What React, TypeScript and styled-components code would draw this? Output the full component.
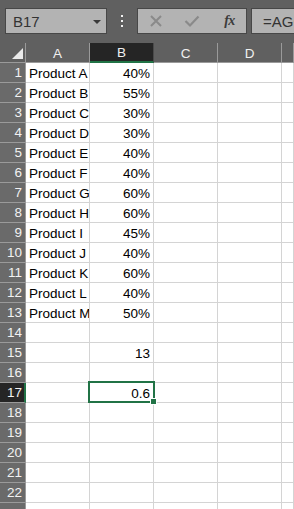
import React from "react";
import styled, { createGlobalStyle, css } from "styled-components";

const Global = createGlobalStyle`
  html, body { margin: 0; padding: 0; background: #606060; overflow: hidden; }
  body { width: 294px; height: 509px; font-family: "Liberation Sans", Arial, sans-serif; }
`;

const Page = styled.div`
  width: 294px;
  height: 509px;
  overflow: hidden;
  background: #606060;
  display: flex;
  flex-direction: column;
`;

const Toolbar = styled.div`
  height: 43px;
  flex: none;
  display: flex;
  align-items: flex-start;
  padding-top: 8px;
  box-sizing: border-box;
  padding-left: 5px;
  overflow: hidden;
`;

const NameBox = styled.div`
  width: 102px;
  height: 26px;
  box-sizing: border-box;
  background: #b3b3b3;
  border: 1px solid #474747;
  display: flex;
  align-items: center;
  justify-content: space-between;
  padding: 0 5px 0 7px;
  font-size: 15px;
  color: #333;
  flex: none;
`;

const Arrow = styled.span`
  width: 0;
  height: 0;
  border-left: 4px solid transparent;
  border-right: 4px solid transparent;
  border-top: 4px solid #3a3a3a;
  margin-top: 1px;
`;

const Dots = styled.div`
  width: 30px;
  height: 26px;
  flex: none;
  display: flex;
  flex-direction: column;
  align-items: center;
  justify-content: center;
  gap: 3px;
  span {
    width: 2px;
    height: 2px;
    background: #f2f2f2;
  }
`;

const ButtonGroup = styled.div`
  width: 110px;
  height: 26px;
  box-sizing: border-box;
  background: #b3b3b3;
  border: 1px solid #474747;
  display: flex;
  align-items: center;
  flex: none;
`;

const ToolButton = styled.div`
  width: 36px;
  height: 24px;
  display: flex;
  align-items: center;
  justify-content: center;
`;

const Fx = styled.span`
  font-family: "Liberation Serif", "Times New Roman", serif;
  font-style: italic;
  font-weight: bold;
  font-size: 14px;
  color: #3c3c3c;
  letter-spacing: -0.5px;
  margin-left: 3px;
`;

const FormulaBox = styled.div`
  margin-left: 4px;
  height: 26px;
  width: 100px;
  flex: none;
  box-sizing: border-box;
  background: #b3b3b3;
  border: 1px solid #474747;
  display: flex;
  align-items: center;
  padding-left: 11px;
  font-size: 15px;
  color: #333;
`;

const Sheet = styled.div`
  display: grid;
  grid-template-columns: 26px repeat(4, 64px) 1fr;
  grid-auto-rows: 20px;
  flex: none;
`;

const Corner = styled.div`
  box-sizing: border-box;
  border-right: 1px solid #9a9a9a;
  border-bottom: 1px solid #9a9a9a;
  position: relative;
  &::after {
    content: "";
    position: absolute;
    right: 2px;
    bottom: 3px;
    width: 0;
    height: 0;
    border-left: 11px solid transparent;
    border-bottom: 11px solid #eaeaea;
  }
`;

const ColHeader = styled.div<{ $active?: boolean }>`
  box-sizing: border-box;
  background: #606060;
  border-right: 1px solid #9a9a9a;
  border-bottom: 1px solid #9a9a9a;
  color: #f0f0f0;
  font-size: 13.5px;
  display: flex;
  align-items: center;
  justify-content: center;
  padding-top: 1px;
  ${(p) =>
    p.$active &&
    css`
      background: #252525;
      border-bottom: 2px solid #217346;
      border-right-color: #4a4a4a;
    `}
`;

const RowHeader = styled.div<{ $active?: boolean }>`
  box-sizing: border-box;
  background: #6a6a6a;
  border-right: 1px solid #9a9a9a;
  border-bottom: 1px solid #9a9a9a;
  color: #f2f2f2;
  font-size: 13.5px;
  display: flex;
  align-items: center;
  justify-content: flex-end;
  padding-right: 3px;
  ${(p) =>
    p.$active &&
    css`
      background: #252525;
      border-right: 2px solid #217346;
      padding-right: 2px;
    `}
`;

const Cell = styled.div<{ $align?: "left" | "right"; $selected?: boolean }>`
  box-sizing: border-box;
  background: #fff;
  border-right: 1px solid #d4d4d4;
  border-bottom: 1px solid #d4d4d4;
  color: #000;
  font-size: 13.5px;
  display: flex;
  align-items: center;
  justify-content: ${(p) => (p.$align === "right" ? "flex-end" : "flex-start")};
  padding: 1px 3px 0 3px;
  white-space: nowrap;
  overflow: hidden;
  position: relative;
  ${(p) =>
    p.$selected &&
    css`
      overflow: visible;
      z-index: 2;
    `}
`;

const SelectionFrame = styled.div`
  position: absolute;
  left: -2px;
  top: -2px;
  right: -2px;
  bottom: -1px;
  border: 2px solid #217346;
  pointer-events: none;
`;

const FillHandle = styled.div`
  position: absolute;
  right: -4px;
  bottom: -4px;
  width: 5px;
  height: 5px;
  background: #217346;
  border: 1px solid #fff;
`;

const CellText = styled.span`
  position: relative;
  z-index: 1;
`;

const products = ["A", "B", "C", "D", "E", "F", "G", "H", "I", "J", "K", "L", "M"];
const values = ["40%", "55%", "30%", "30%", "40%", "40%", "60%", "60%", "45%", "40%", "60%", "40%", "50%"];

type RowData = { a?: string; b?: string };

const rows: RowData[] = [];
for (let i = 0; i < 23; i++) {
  if (i < 13) rows.push({ a: `Product ${products[i]}`, b: values[i] });
  else if (i === 14) rows.push({ b: "13" });
  else if (i === 16) rows.push({ b: "0.6" });
  else rows.push({});
}

const XIcon = () => (
  <svg width="14" height="14" viewBox="0 0 14 14">
    <path d="M2 2 L12 12 M12 2 L2 12" stroke="#8a8a8a" strokeWidth="2" fill="none" />
  </svg>
);

const CheckIcon = () => (
  <svg width="16" height="14" viewBox="0 0 16 14">
    <path d="M1.5 7 L6 11.5 L14.5 2.5" stroke="#8a8a8a" strokeWidth="2.2" fill="none" />
  </svg>
);

export default function App() {
  return (
    <Page>
      <Global />
      <Toolbar>
        <NameBox>
          <span>B17</span>
          <Arrow />
        </NameBox>
        <Dots>
          <span />
          <span />
          <span />
        </Dots>
        <ButtonGroup>
          <ToolButton>
            <XIcon />
          </ToolButton>
          <ToolButton>
            <CheckIcon />
          </ToolButton>
          <ToolButton>
            <Fx>fx</Fx>
          </ToolButton>
        </ButtonGroup>
        <FormulaBox>=AGGREGATE</FormulaBox>
      </Toolbar>
      <Sheet>
        <Corner />
        {["A", "B", "C", "D", "E"].map((c) => (
          <ColHeader key={c} $active={c === "B"}>
            {c === "E" ? "" : c}
          </ColHeader>
        ))}
        {rows.map((r, i) => {
          const n = i + 1;
          const sel = n === 17;
          return (
            <React.Fragment key={n}>
              <RowHeader $active={sel}>{n <= 22 ? n : ""}</RowHeader>
              <Cell>{r.a}</Cell>
              <Cell $align="right" $selected={sel}>
                {r.b && <CellText>{r.b}</CellText>}
                {sel && (
                  <SelectionFrame>
                    <FillHandle />
                  </SelectionFrame>
                )}
              </Cell>
              <Cell />
              <Cell />
              <Cell />
            </React.Fragment>
          );
        })}
      </Sheet>
    </Page>
  );
}
